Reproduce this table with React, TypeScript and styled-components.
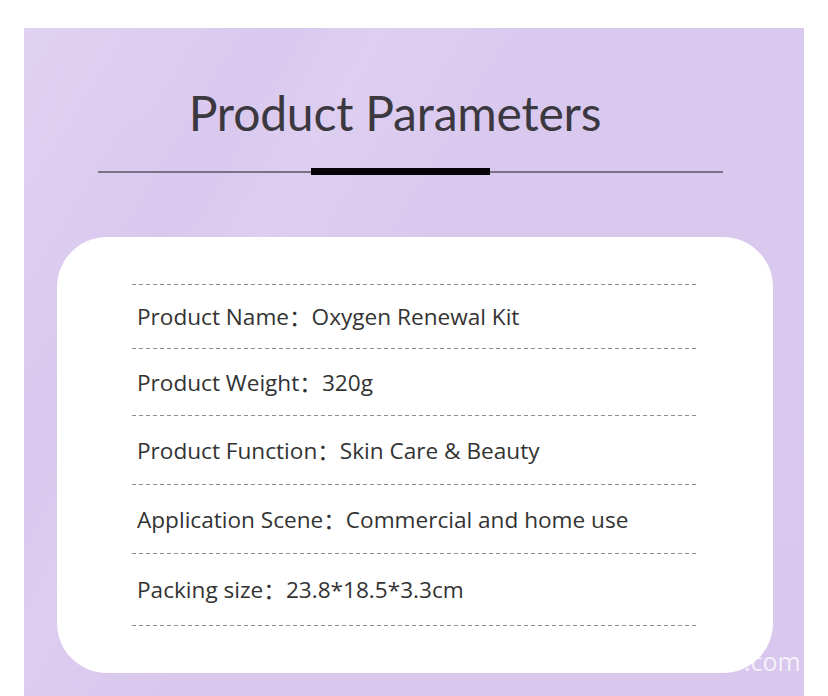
import React from "react";
import styled, { createGlobalStyle } from "styled-components";

const Global = createGlobalStyle`
  html, body { margin: 0; padding: 0; background: #ffffff; overflow: hidden; }
  body { width: 828px; height: 696px; }
`;

const Page = styled.div`
  width: 828px;
  height: 696px;
  padding: 28px 24px 0;
  box-sizing: border-box;
  overflow: hidden;
`;

const Panel = styled.section`
  position: relative;
  width: 780px;
  height: 700px;
  box-sizing: border-box;
  padding-top: 60px;
  overflow: hidden;
  background:
    linear-gradient(120deg, rgba(255,255,255,0.16) 0%, rgba(255,255,255,0) 22%, rgba(255,255,255,0.1) 30%, rgba(255,255,255,0) 45%),
    linear-gradient(180deg, #dac9ef 0%, #d9c7ee 100%);
  display: flex;
  flex-direction: column;
  align-items: center;
`;

const Title = styled.h1`
  margin: 0 0 0 -38px;
  font-family: "Lato", "Open Sans", sans-serif;
  font-weight: 400;
  font-size: 48px;
  line-height: 50px;
  color: #3b3840;
  letter-spacing: -0.2px;
`;

const Divider = styled.div`
  margin: 30px 0 0 -7px;
  width: 625px;
  display: flex;
  align-items: center;
`;

const Thin = styled.div<{ $w: number }>`
  width: ${(p) => p.$w}px;
  height: 2px;
  background: #7b7287;
`;

const Thick = styled.div`
  width: 179px;
  height: 7px;
  background: #050308;
`;

const Card = styled.div`
  margin: 62px 0 0 2px;
  width: 716px;
  height: 436px;
  box-sizing: border-box;
  background: #ffffff;
  border-radius: 50px;
  padding: 47px 0 0 75px;
`;

const Dash = styled.div`
  width: 565px;
  height: 1px;
  background-image: repeating-linear-gradient(90deg, #8d8d8d 0 4px, transparent 4px 7px);
`;

const Row = styled.div<{ $h: number }>`
  height: ${(p) => p.$h - 1}px;
  display: flex;
  align-items: center;
  padding-left: 5px;
  font-family: "Open Sans", "Noto Sans CJK SC", sans-serif;
  font-size: 22.6px;
  color: #333333;
`;

const Colon = styled.span`
  font-family: "Noto Sans CJK SC", sans-serif;
`;

const Watermark = styled.span`
  position: absolute;
  left: 720px;
  top: 616px;
  font-family: "Open Sans", sans-serif;
  font-size: 25px;
  color: rgba(255, 255, 255, 0.75);
`;

const rows: [string, string, number][] = [
  ["Product Name", "Oxygen Renewal Kit", 64],
  ["Product Weight", "320g", 67],
  ["Product Function", "Skin Care & Beauty", 69],
  ["Application Scene", "Commercial and home use", 69],
  ["Packing size", "23.8*18.5*3.3cm", 72],
];

export default function App() {
  return (
    <>
      <Global />
      <Page>
        <Panel>
          <Title>Product Parameters</Title>
          <Divider>
            <Thin $w={213} />
            <Thick />
            <Thin $w={233} />
          </Divider>
          <Watermark>.com</Watermark>
          <Card>
            <Dash />
            {rows.map(([k, v, h]) => (
              <React.Fragment key={k}>
                <Row $h={h}>
                  {k}
                  <Colon>：</Colon>
                  {v}
                </Row>
                <Dash />
              </React.Fragment>
            ))}
          </Card>
        </Panel>
      </Page>
    </>
  );
}
